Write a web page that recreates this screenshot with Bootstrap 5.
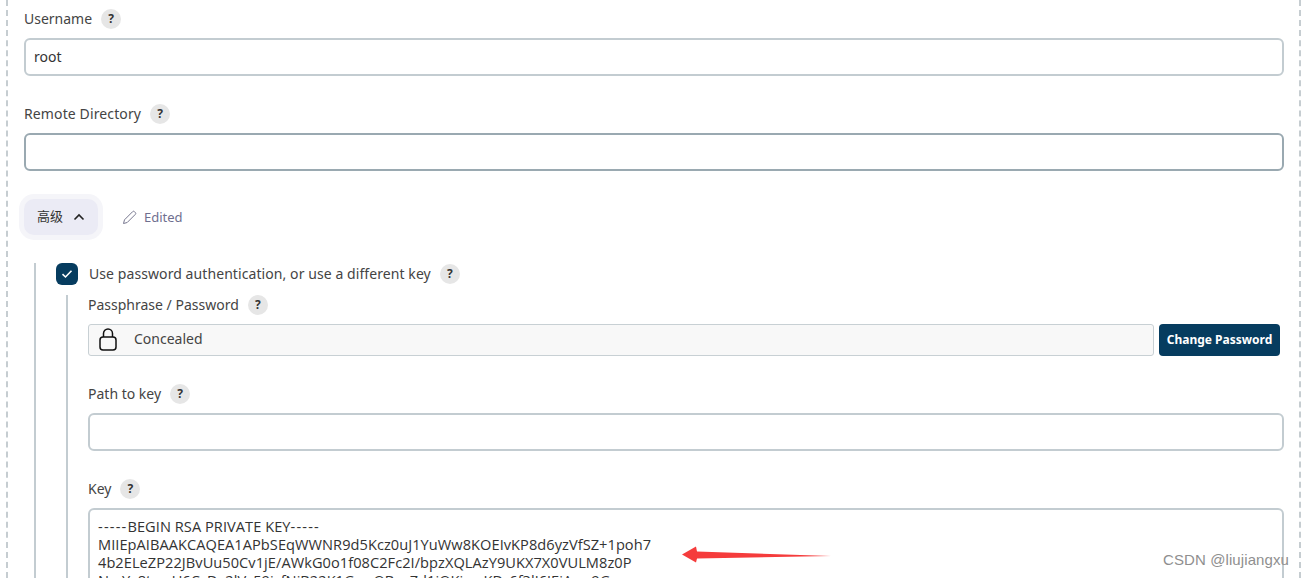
<!DOCTYPE html>
<html lang="en"><head><meta charset="utf-8">
<link href="https://cdn.jsdelivr.net/npm/bootstrap@5.3.0/dist/css/bootstrap.min.css" rel="stylesheet">
<style>
html,body{height:578px;overflow:hidden;background:#fff}
body{font-family:"Noto Sans","Noto Sans CJK SC",sans-serif;font-size:14px;color:#333;line-height:20px}
.frame{margin:0 3px 0 6px;border-left:2px dashed #c6cdd1;border-right:2px dashed #c6cdd1;padding:9px 15px 0 16px;height:578px;overflow:hidden}
.lab{height:20px;margin-bottom:9px;gap:9px;color:#444}
.wide1{letter-spacing:.12px}
.wide2{letter-spacing:.08px}
.qm{width:20px;height:20px;border-radius:50%;background:#e6e6e6;color:#333;font-weight:700;font-size:12px;line-height:20px;text-align:center}
.fld{display:block;width:100%;height:38px;border:2px solid #c3ccd1;border-radius:6px;padding:0 8px;color:#333;background:#fff;margin-bottom:28px;line-height:34px}
.fld.dark{border-color:#9aa9b1}
.adv{height:36px;width:74px;background:#ebebf5;border:0;border-radius:10px;box-shadow:0 0 0 5px #f5f5f9;color:#333;font-size:13px;gap:10px;padding:0}
.edited{color:#6f6f8f;font-size:13px;gap:7px;margin-left:24px}
.advrow{height:36px;margin-bottom:28px}
.sec1{border-left:2px solid #c3ccd1;margin-left:10px;padding-left:20px}
.chk{width:22px;height:22px;border-radius:6px;background:#063c5f}
.chkrow{height:22px;gap:11px;margin-bottom:10px}
.sec2{border-left:2px solid #c3ccd1;margin-left:10px;padding-left:20px}
.lab2{margin-bottom:9px;height:20px;gap:9px;color:#444}
.conceal{flex:1;height:32px;background:#f8f8f8;border:1px solid #c8d0d4;border-radius:3px;gap:15px;padding:0 0 2px 10px;color:#444}
.chgbtn{height:32px;width:121px;background:#063c5f;color:#fff;font-weight:700;font-size:12px;border:0;border-radius:4px;padding:0;margin-right:4px}
.pwrow{gap:5px;margin-bottom:28px}
.keybox{border:2px solid #c3ccd1;border-radius:6px;padding:7px 8px;line-height:18px;height:120px;white-space:pre;overflow:hidden;color:#333;font-family:"Open Sans",sans-serif;font-size:14.6px;letter-spacing:.05px}
.dashes{letter-spacing:1.2px}
.fade{position:absolute;left:0;right:0;bottom:0;height:28px;background:linear-gradient(rgba(238,238,238,0),rgba(238,238,238,.85));pointer-events:none}
.wm{position:absolute;left:1163px;top:551px;font-family:"Liberation Sans",sans-serif;font-size:15px;letter-spacing:.1px;line-height:18px;color:#8f8f8f}
.arrow{position:absolute;left:680px;top:544px}
</style></head><body>
<div class="frame">
 <div class="d-flex align-items-center lab"><span>Username</span><span class="qm">?</span></div>
 <div class="fld">root</div>
 <div class="d-flex align-items-center lab"><span class="wide1">Remote Directory</span><span class="qm">?</span></div>
 <div class="fld dark"></div>
 <div class="d-flex align-items-center advrow">
  <button class="btn d-flex align-items-center justify-content-center adv"><span>高级</span>
   <svg width="12" height="8" viewBox="0 0 12 8"><path d="M1.5 6.5 6 2l4.5 4.5" fill="none" stroke="#222" stroke-width="1.6"/></svg></button>
  <span class="d-flex align-items-center edited">
   <svg width="15" height="15" viewBox="0 0 15 15"><path d="M1.5 13.5l1-3.7L10.6 1.700a1.300 1.300 0 0 1 1.900 0l.8.8a1.300 1.300 0 0 1 0 1.900L5.200 12.500z" fill="none" stroke="#77778f" stroke-width="1"/></svg>Edited</span>
 </div>
 <div class="sec1">
  <div class="d-flex align-items-center chkrow">
   <span class="chk d-flex align-items-center justify-content-center"><svg width="12" height="10" viewBox="0 0 12 10"><path d="M1.500 5.200 4.500 8 10.500 1.800" fill="none" stroke="#fff" stroke-width="1.600"/></svg></span>
   <span class="d-flex align-items-center lab2 mb-0"><span class="wide2">Use password authentication, or use a different key</span><span class="qm">?</span></span>
  </div>
  <div class="sec2">
   <div class="d-flex align-items-center lab2"><span>Passphrase / Password</span><span class="qm">?</span></div>
   <div class="d-flex pwrow">
    <div class="d-flex align-items-center conceal">
     <svg width="20" height="24" viewBox="0 0 20 24"><rect x="1" y="10" width="16" height="13" rx="3" fill="none" stroke="#111" stroke-width="1.500"/><path d="M4.500 10V6.500a4.500 4.500 0 0 1 9 0V10" fill="none" stroke="#111" stroke-width="1.500"/></svg>
     <span>Concealed</span></div>
    <button class="btn chgbtn">Change Password</button>
   </div>
   <div class="d-flex align-items-center lab2"><span>Path to key</span><span class="qm">?</span></div>
   <div class="fld"></div>
   <div class="d-flex align-items-center lab2"><span>Key</span><span class="qm">?</span></div>
   <div class="keybox"><span class="dashes">-----</span>BEGIN RSA PRIVATE KEY<span class="dashes">-----</span>
MIIEpAIBAAKCAQEA1APbSEqWWNR9d5Kcz0uJ1YuWw8KOEIvKP8d6yzVfSZ+1poh7
4b2ELeZP22JBvUu50Cv1jE/AWkG0o1f08C2Fc2I/bpzXQLAzY9UKX7X0VULM8z0P
NrcYv8twuU6CsDx2lVc59jzfNiB22K1GwvQBxxZd1iQKjwnKDr6f3lJ6JEjAwx9G</div>
  </div>
 </div>
</div>
<div class="fade"></div>
<svg class="arrow" width="154" height="22" viewBox="0 0 154 22"><path d="M2 10.500 16 2.500 17 7.500 151 12 17 14.500 16 18.500z" fill="#f53c3c"/></svg>
<div class="wm">CSDN @liujiangxu</div>
</body></html>
